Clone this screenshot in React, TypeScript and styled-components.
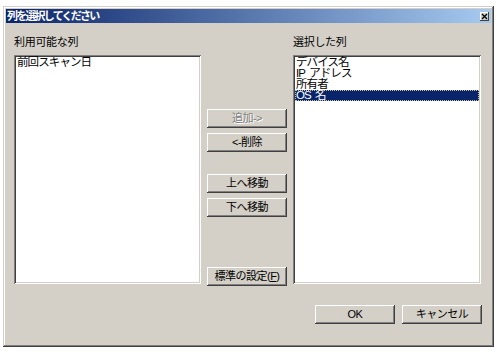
import styled, { createGlobalStyle } from "styled-components";

//styles
const face = "#d4d0c8";
const uiFont = `"Liberation Sans", "Noto Sans CJK JP", sans-serif`;

const Global = createGlobalStyle`
  body {
    margin: 0;
    background: #ffffff;
    font-family: ${uiFont};
  }
`;
const Page = styled.div`
  padding: 6px 0 0 3px;
`;
const Window = styled.div`
  width: 491px;
  height: 341px;
  box-sizing: border-box;
  padding: 3px;
  background: ${face};
  box-shadow: inset -1px -1px #404040, inset 1px 1px ${face},
    inset -2px -2px #808080, inset 2px 2px #ffffff;
  display: flex;
  flex-direction: column;
`;
const TitleBar = styled.div`
  height: 14px;
  display: flex;
  align-items: center;
  justify-content: space-between;
  padding: 0 2px 0 1px;
  background: linear-gradient(to right, #0a246a, #a6caf0);
`;
const Title = styled.span`
  color: #ffffff;
  font-size: 11px;
  font-weight: bold;
  letter-spacing: -1.8px;
  line-height: 14px;
`;
const CloseBox = styled.div`
  width: 9px;
  height: 9px;
  background: ${face};
  box-shadow: inset -1px -1px #404040, inset 1px 1px #ffffff;
  display: flex;
  align-items: center;
  justify-content: center;
`;
const Body = styled.div`
  flex: 1;
  padding: 12px 9px 0 8px;
  display: flex;
  flex-direction: column;
`;
const Columns = styled.div`
  display: grid;
  grid-template-columns: 187px 92px 188px;
  grid-template-rows: 14px 229px;
  row-gap: 6px;
`;
const Label = styled.div`
  font-size: 11px;
  line-height: 14px;
  color: #000000;
  letter-spacing: -0.3px;
`;
const ListBox = styled.div`
  background: #ffffff;
  box-sizing: border-box;
  padding: 2px;
  box-shadow: inset 1px 1px #808080, inset -1px -1px #ffffff,
    inset 2px 2px #404040, inset -2px -2px ${face};
`;
const Item = styled.div<{ $selected?: boolean }>`
  height: 11px;
  line-height: 11px;
  font-size: 11.5px;
  padding-left: 1px;
  white-space: pre;
  letter-spacing: -0.9px;
  word-spacing: 2px;
  color: ${(p) => (p.$selected ? "#ffffff" : "#000000")};
  background: ${(p) => (p.$selected ? "#0a246a" : "transparent")};
  outline: ${(p) => (p.$selected ? "1px dotted #c8c4a0" : "none")};
  outline-offset: -1px;
`;
const Middle = styled.div`
  grid-row: 2;
  grid-column: 2;
  display: flex;
  flex-direction: column;
  align-items: center;
  padding-top: 54px;
`;
const Button = styled.div<{ $disabled?: boolean }>`
  width: 80px;
  height: 19px;
  box-sizing: border-box;
  background: ${face};
  box-shadow: inset -1px -1px #404040, inset 1px 1px #ffffff,
    inset -2px -2px #808080;
  font-size: 11px;
  line-height: 19px;
  text-align: center;
  letter-spacing: -0.5px;
  color: ${(p) => (p.$disabled ? "#808080" : "#000000")};
  text-shadow: ${(p) => (p.$disabled ? "1px 1px #ffffff" : "none")};
`;
const ButtonGroup = styled.div<{ $top?: number }>`
  display: flex;
  flex-direction: column;
  gap: 5px;
  margin-top: ${(p) => p.$top ?? 0}px;
`;
const Bottom = styled.div`
  margin-top: auto;
  margin-bottom: -2px;
`;
const Footer = styled.div`
  display: flex;
  justify-content: flex-end;
  gap: 7px;
  margin-top: 21px;
`;
const Key = styled.span`
  text-decoration: underline;
`;

const CloseIcon = () => (
  <svg width="7" height="7" viewBox="0 0 7 7">
    <path d="M1 1 L6 6 M6 1 L1 6" stroke="#000" strokeWidth="1.3" />
  </svg>
);

const App = () => {
  const available = ["前回スキャン日"];
  const selected = ["デバイス名", "IP アドレス", "所有者", "OS 名"];

  return (
    <Page>
      <Global />
      <Window>
        <TitleBar>
          <Title>列を選択してください</Title>
          <CloseBox>
            <CloseIcon />
          </CloseBox>
        </TitleBar>
        <Body>
          <Columns>
            <Label>利用可能な列</Label>
            <div />
            <Label>選択した列</Label>
            <ListBox>
              {available.map((name) => (
                <Item key={name}>{name}</Item>
              ))}
            </ListBox>
            <Middle>
              <ButtonGroup>
                <Button $disabled>追加-&gt;</Button>
                <Button>&lt;-削除</Button>
              </ButtonGroup>
              <ButtonGroup $top={22}>
                <Button>上へ移動</Button>
                <Button>下へ移動</Button>
              </ButtonGroup>
              <Bottom>
                <Button>
                  標準の設定(<Key>F</Key>)
                </Button>
              </Bottom>
            </Middle>
            <ListBox>
              {selected.map((name, i) => (
                <Item key={name} $selected={i === selected.length - 1}>
                  {name}
                </Item>
              ))}
            </ListBox>
          </Columns>
          <Footer>
            <Button>OK</Button>
            <Button>キャンセル</Button>
          </Footer>
        </Body>
      </Window>
    </Page>
  );
};

export default App;
